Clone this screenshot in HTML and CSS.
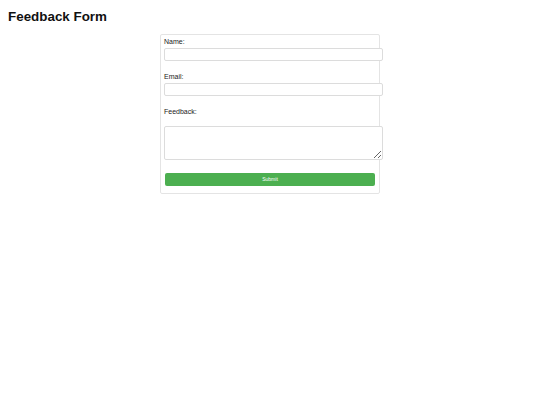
FILE: index.html
```html
<!DOCTYPE html>
<html lang="en">
<head>
<meta charset="utf-8">
<title>Feedback Form</title>
<link rel="stylesheet" href="styles.css">
</head>
<body>
<h1 class="title">Feedback Form</h1>
<form class="card">
  <label class="label" for="name">Name:</label>
  <input class="field" type="text" id="name">
  <label class="label" for="email">Email:</label>
  <input class="field" type="email" id="email">
  <label class="label label-gap" for="feedback">Feedback:</label>
  <textarea class="field area" id="feedback"></textarea>
  <button class="submit" type="button">Submit</button>
</form>
</body>
</html>
```
FILE: styles.css
```css
html, body {
  margin: 0;
  padding: 0;
  background: #fff;
}
body {
  font-family: "Liberation Sans", Arial, sans-serif;
  color: #222;
}
.title {
  margin: 9px 0 0 8px;
  font-size: 13.4px;
  line-height: 16px;
  font-weight: bold;
  color: #111;
}
.card {
  width: 220px;
  box-sizing: border-box;
  margin: 9px auto 0;
  border: 1px solid #e4e4e4;
  border-radius: 2px;
  padding: 3px 3px 7px;
  display: flex;
  flex-direction: column;
  align-items: flex-start;
}
.label {
  display: block;
  font-size: 7px;
  line-height: 8px;
  color: #1a1a1a;
  margin-bottom: 2px;
}
.label-gap {
  margin-bottom: 10px;
}
.field {
  box-sizing: content-box;
  width: 100%;
  height: 11px;
  padding: 0 3px 0 2px;
  margin: 0 0 12px;
  border: 1px solid #dcdcdc;
  border-radius: 2px;
  background: #fff;
  font-size: 6.7px;
  font-family: inherit;
}
.area {
  height: 32px;
  margin-bottom: 13px;
  resize: vertical;
}
.submit {
  width: 210px;
  height: 13px;
  margin: 0 0 0 1px;
  padding: 0;
  border: none;
  border-radius: 2px;
  background: #4caf50;
  color: #fff;
  font-family: inherit;
  font-size: 5px;
  line-height: 13px;
}
```
